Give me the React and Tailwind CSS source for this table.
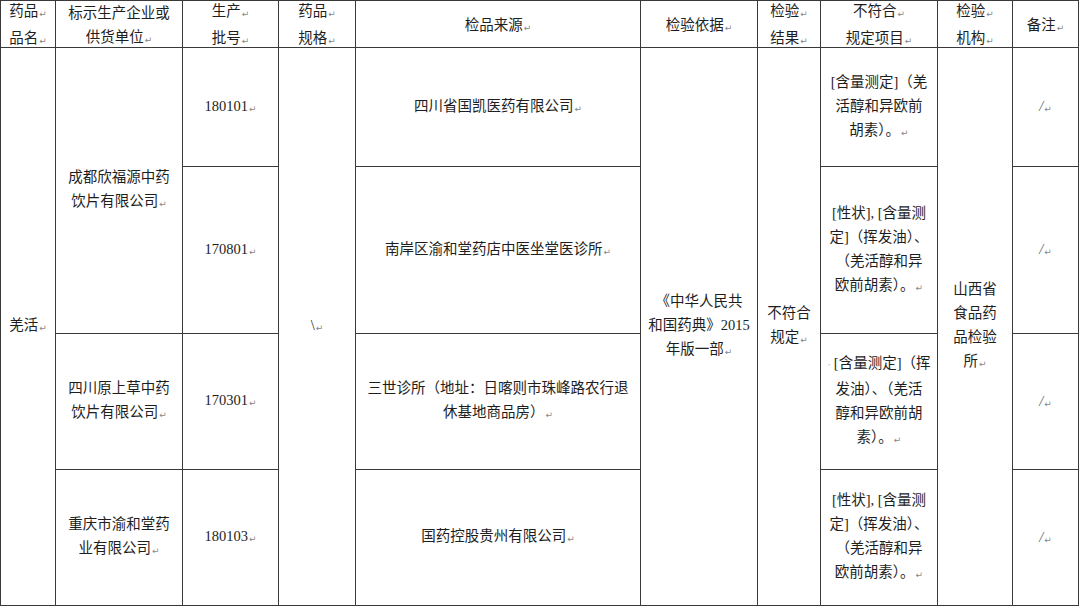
import React from "react";

const M = () => (
  <span className="text-[9px] text-[#888] font-['DejaVu_Sans'] align-[-1px] ml-[1px]">↵</span>
);

const td = "border border-[#3a3a3a] text-center align-middle p-0";

const Lines = ({ lines, mark = true }) => (
  <div className="leading-[24px]">
    {lines.map((l, i) => (
      <div key={i}>
        {l}
        {mark && i === lines.length - 1 ? <M /> : null}
      </div>
    ))}
  </div>
);

const H = ({ lines, markAll = true }) => (
  <div className="h-[45px] pt-[4px] flex flex-col justify-center items-center leading-[24px]">
    {lines.map((l, i) => (
      <div key={i} className="shrink-0">
        {l}
        {markAll || i === lines.length - 1 ? <M /> : null}
      </div>
    ))}
  </div>
);

const Slash = () => (
  <div>
    <span className="text-[#666] italic">/</span>
    <M />
  </div>
);

export default function App() {
  const item2 = ["[性状], [含量测", "定]（挥发油）、", "（羌活醇和异", "欧前胡素）。"];
  return (
    <div className="w-[1080px] h-[606px] bg-white overflow-hidden text-[#1e1e1e] text-[14.5px] font-['Liberation_Serif','Noto_Sans_CJK_SC',serif]">
      <table className="border-collapse table-fixed w-[1078px]">
        <colgroup>
          <col className="w-[55px]" />
          <col className="w-[127px]" />
          <col className="w-[96px]" />
          <col className="w-[77px]" />
          <col className="w-[285px]" />
          <col className="w-[117px]" />
          <col className="w-[63px]" />
          <col className="w-[117px]" />
          <col className="w-[75px]" />
          <col className="w-[66px]" />
        </colgroup>
        <tbody>
          <tr className="h-[47px]">
            <td className={td}><H lines={["药品", "品名"]} /></td>
            <td className={td}><H lines={["标示生产企业或", "供货单位"]} markAll={false} /></td>
            <td className={td}><H lines={["生产", "批号"]} /></td>
            <td className={td}><H lines={["药品", "规格"]} /></td>
            <td className={td}><H lines={["检品来源"]} /></td>
            <td className={td}><H lines={["检验依据"]} /></td>
            <td className={td}><H lines={["检验", "结果"]} /></td>
            <td className={td}><H lines={["不符合", "规定项目"]} /></td>
            <td className={td}><H lines={["检验", "机构"]} /></td>
            <td className={td}><H lines={["备注"]} /></td>
          </tr>
          <tr className="h-[119px]">
            <td className={td} rowSpan={4}><Lines lines={["羌活"]} /></td>
            <td className={td} rowSpan={2}><Lines lines={["成都欣福源中药", "饮片有限公司"]} /></td>
            <td className={td}><Lines lines={["180101"]} /></td>
            <td className={td} rowSpan={4}><Lines lines={["\\"]} /></td>
            <td className={td}><Lines lines={["四川省国凯医药有限公司"]} /></td>
            <td className={td} rowSpan={4}><Lines lines={["《中华人民共", "和国药典》2015", "年版一部"]} /></td>
            <td className={td} rowSpan={4}><Lines lines={["不符合", "规定"]} /></td>
            <td className={td}><Lines lines={["[含量测定]（羌", "活醇和异欧前", "胡素）。"]} /></td>
            <td className={td} rowSpan={4}><Lines lines={["山西省", "食品药", "品检验", "所"]} /></td>
            <td className={td}><Slash /></td>
          </tr>
          <tr className="h-[167px]">
            <td className={td}><Lines lines={["170801"]} /></td>
            <td className={td}><Lines lines={["南岸区渝和堂药店中医坐堂医诊所"]} /></td>
            <td className={td}><Lines lines={item2} /></td>
            <td className={td}><Slash /></td>
          </tr>
          <tr className="h-[136px]">
            <td className={td}><Lines lines={["四川原上草中药", "饮片有限公司"]} /></td>
            <td className={td}><Lines lines={["170301"]} /></td>
            <td className={td}><Lines lines={["三世诊所（地址：日喀则市珠峰路农行退", "休基地商品房）"]} /></td>
            <td className={td}>
              <Lines
                lines={[
                  <span key="a"><span className="text-[#aaa] text-[10px] mr-[3px]">·</span>[含量测定]（挥</span>,
                  "发油）、（羌活",
                  "醇和异欧前胡",
                  "素）。",
                ]}
              />
            </td>
            <td className={td}><Slash /></td>
          </tr>
          <tr className="h-[136px]">
            <td className={td}><Lines lines={["重庆市渝和堂药", "业有限公司"]} /></td>
            <td className={td}><Lines lines={["180103"]} /></td>
            <td className={td}><Lines lines={["国药控股贵州有限公司"]} /></td>
            <td className={td}><Lines lines={item2} /></td>
            <td className={td}><Slash /></td>
          </tr>
        </tbody>
      </table>
    </div>
  );
}
